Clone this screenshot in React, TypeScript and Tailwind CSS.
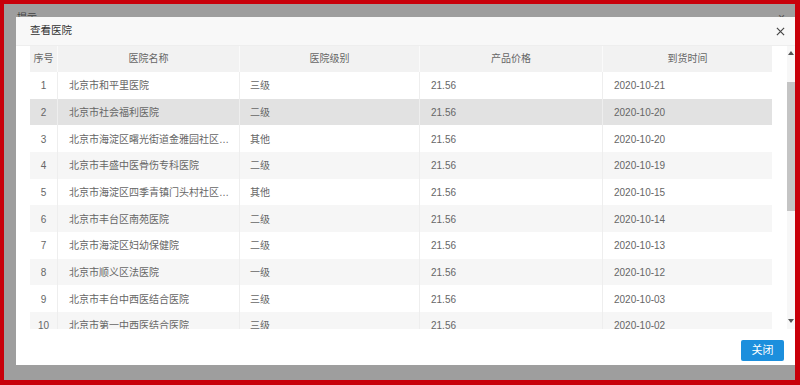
const hospitals = [
  { id: 1, name: "北京市和平里医院", level: "三级", price: "21.56", date: "2020-10-21" },
  { id: 2, name: "北京市社会福利医院", level: "二级", price: "21.56", date: "2020-10-20" },
  { id: 3, name: "北京市海淀区曙光街道金雅园社区卫生服务站", level: "其他", price: "21.56", date: "2020-10-20" },
  { id: 4, name: "北京市丰盛中医骨伤专科医院", level: "二级", price: "21.56", date: "2020-10-19" },
  { id: 5, name: "北京市海淀区四季青镇门头村社区卫生服务站", level: "其他", price: "21.56", date: "2020-10-15" },
  { id: 6, name: "北京市丰台区南苑医院", level: "二级", price: "21.56", date: "2020-10-14" },
  { id: 7, name: "北京市海淀区妇幼保健院", level: "二级", price: "21.56", date: "2020-10-13" },
  { id: 8, name: "北京市顺义区法医院", level: "一级", price: "21.56", date: "2020-10-12" },
  { id: 9, name: "北京市丰台中西医结合医院", level: "三级", price: "21.56", date: "2020-10-03" },
  { id: 10, name: "北京市第一中西医结合医院", level: "三级", price: "21.56", date: "2020-10-02" },
];

const rowBg = (id: number) => {
  if (id === 2) return "bg-[#e2e2e2]";
  return id % 2 === 0 ? "bg-[#f6f6f6]" : "bg-white";
};

export default function App() {
  return (
    <div
      className="w-[800px] h-[385px] overflow-hidden border-l-4 border-t-4 border-r-[5px] border-b-[5px] border-[#c8000a] bg-[#9e9e9e] text-[10px] text-[#666]"
      style={{ fontFamily: '"Liberation Sans", "Noto Sans CJK SC", sans-serif' }}
    >
      {/* page behind the dialog */}
      <div className="relative h-[13px] overflow-hidden">
        <span className="absolute left-[13px] top-[9px] text-[10px] leading-none text-[#444]">提示</span>
        <span className="absolute right-[10px] top-[8px] text-[12px] leading-none text-[#555]">×</span>
      </div>

      <div className="ml-[12px] flex h-[348px] w-[779px] flex-col bg-white">
        {/* title */}
        <div className="flex h-[29px] items-center justify-between border-b border-[#eee] bg-[#f8f8f8] pl-[14px] pr-[10px]">
          <span className="text-[10.5px] text-[#333]">查看医院</span>
          <svg width="9" height="9" viewBox="0 0 10 10" className="text-[#444]">
            <path d="M1 1 L9 9 M9 1 L1 9" stroke="currentColor" strokeWidth="1.3" />
          </svg>
        </div>

        {/* table */}
        <div className="flex h-[283px] pl-[14px]">
          <div className="w-[742px] overflow-hidden">
            <div className="flex h-[26px] items-center bg-[#f2f2f2] text-[#666]">
              <div className="w-[28px] border-r border-[#fafafa] text-center leading-[26px]">序号</div>
              <div className="w-[182px] border-r border-[#fafafa] text-center leading-[26px]">医院名称</div>
              <div className="w-[180px] border-r border-[#fafafa] text-center leading-[26px]">医院级别</div>
              <div className="w-[183px] border-r border-[#fafafa] text-center leading-[26px]">产品价格</div>
              <div className="flex-1 text-center leading-[26px]">到货时间</div>
            </div>
            {hospitals.map((h) => (
              <div key={h.id} className={`flex h-[26.67px] items-center ${rowBg(h.id)}`}>
                <div className="flex h-full w-[28px] items-center justify-center border-r border-[#eee] pt-[1px]">{h.id}</div>
                <div className="flex h-full w-[182px] min-w-0 items-center border-r border-[#eee] pl-[11px] pr-[3px] pt-[1px]">
                  <span className="min-w-0 truncate">{h.name}</span>
                </div>
                <div className="flex h-full w-[180px] items-center border-r border-[#eee] px-[10px] pt-[1px]">{h.level}</div>
                <div className="flex h-full w-[183px] items-center border-r border-[#eee] px-[11px] pt-[1px]">{h.price}</div>
                <div className="flex h-full flex-1 items-center px-[11px] pt-[1px]">{h.date}</div>
              </div>
            ))}
          </div>
          <div className="ml-[15px] flex h-full w-[8px] flex-col bg-[#f7f7f7]">
            <div className="flex h-[36px] justify-center pt-[5px]">
              <svg width="6" height="4" viewBox="0 0 6 4">
                <path d="M0 4 L3 0 L6 4 Z" fill="#555" />
              </svg>
            </div>
            <div className="h-[129px] bg-[#c4c4c4]" />
            <div className="flex flex-1 items-end justify-center pb-[6px]">
              <svg width="6" height="4" viewBox="0 0 6 4">
                <path d="M0 0 L6 0 L3 4 Z" fill="#555" />
              </svg>
            </div>
          </div>
        </div>

        {/* footer */}
        <div className="flex flex-1 items-start justify-end pr-[11px] pt-[11px]">
          <button
            type="button"
            className="h-[21px] w-[43px] rounded-[2px] bg-[#1c8fdd] text-[11px] text-white"
          >
            关闭
          </button>
        </div>
      </div>
    </div>
  );
}
